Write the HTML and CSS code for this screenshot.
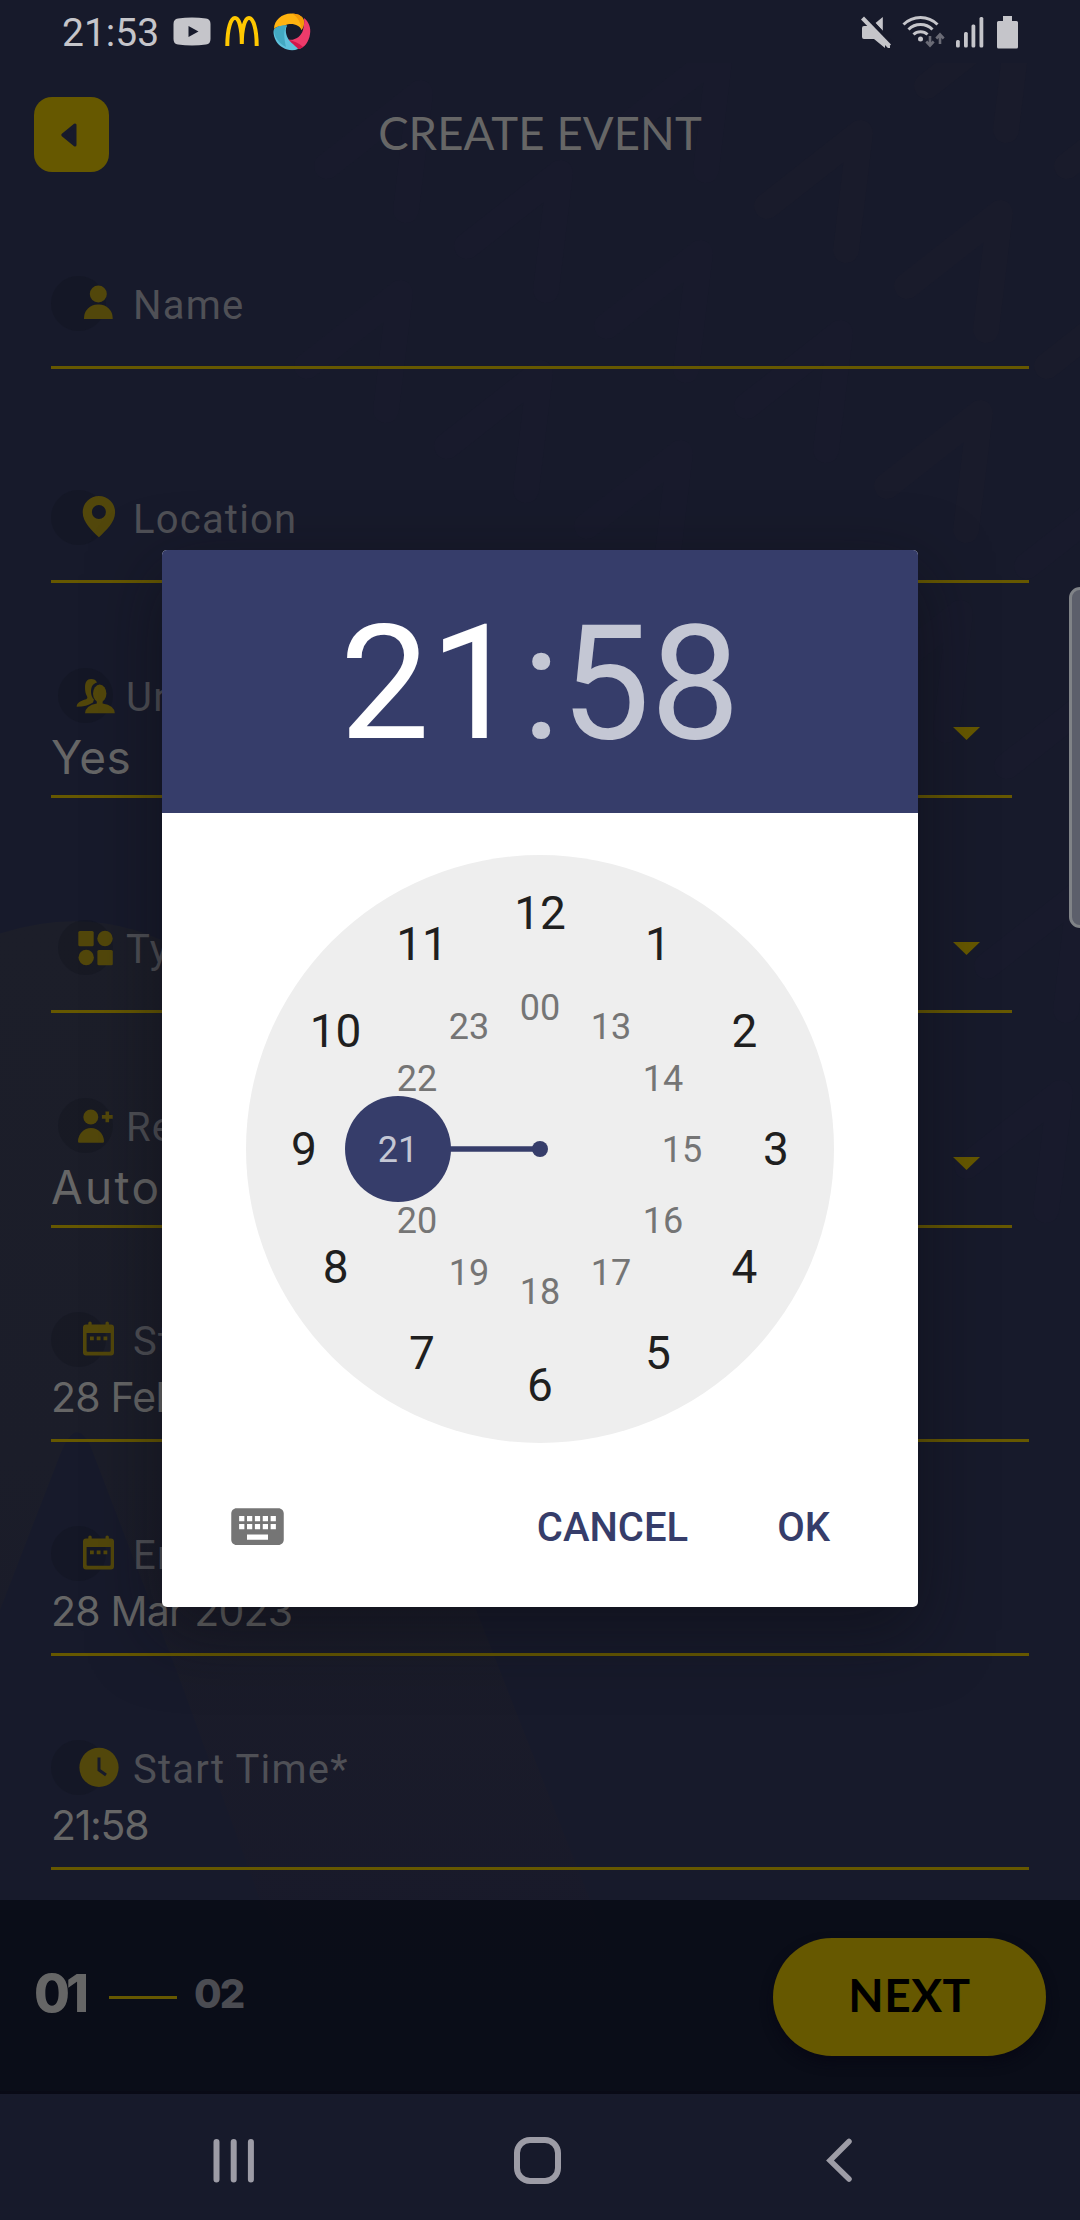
FILE: index.html
```html
<!DOCTYPE html>
<html lang="en">
<head>
<meta charset="utf-8">
<title>Create Event</title>
<link rel="stylesheet" href="styles.css">
</head>
<body>
<div class="screen">
  <svg class="backdrop" viewBox="0 0 1080 2220" aria-hidden="true">
    <defs>
      <path id="tick" d="M-93 73L0 0L-14 117" fill="none" stroke-width="26" stroke-linecap="round" stroke-linejoin="round"/>
      <linearGradient id="fade" x1="0" y1="0" x2="0" y2="1">
        <stop offset="0" stop-color="#1c1e29"/>
        <stop offset=".5" stop-color="#1b1d29"/>
        <stop offset="1" stop-color="#18192a"/>
      </linearGradient>
      <clipPath id="below-status"><rect y="63" width="1080" height="2030"/></clipPath>
    </defs>
    <g clip-path="url(#below-status)">
      <g stroke="#191b2b">
        <use href="#tick" x="860" y="133"/><use href="#tick" x="1000" y="213"/><use href="#tick" x="1020" y="13"/>
        <use href="#tick" x="1140" y="293"/><use href="#tick" x="1160" y="93"/><use href="#tick" x="980" y="413"/>
      </g>
      <g stroke="#181a2c">
        <use href="#tick" x="720" y="53"/><use href="#tick" x="700" y="253"/><use href="#tick" x="840" y="333"/>
        <use href="#tick" x="680" y="453"/><use href="#tick" x="560" y="173"/><use href="#tick" x="540" y="373"/>
        <use href="#tick" x="400" y="293"/><use href="#tick" x="420" y="93"/><use href="#tick" x="1120" y="493"/>
        <use href="#tick" x="960" y="613"/><use href="#tick" x="1100" y="693"/><use href="#tick" x="1080" y="893"/>
        <use href="#tick" x="1060" y="1093"/>
      </g>
      <path fill="url(#fade)" d="M-60 960Q75 885 190 955Q235 990 260 1060L590 1900L625 2000H310L260 1900L180 1680L90 1445Q75 1415 60 1455L0 1610L-60 1750Z"/>
    </g>
  </svg>

  <header class="status">
    <span class="status-time">21:53</span>
    <svg class="notif" width="38" height="38" viewBox="0 0 38 38"><path fill="#c5c5ca" d="M5 5.500Q19 3.500 33 5.500Q37.500 6 37.500 11V26Q37.500 31 33 31.500Q19 33.500 5 31.500Q.5 31 .5 26V11Q.5 6 5 5.500Z"/><path fill="#171a2b" d="M15.500 13v11l10-5.500z"/></svg>
    <svg class="notif notif-arches" width="34" height="38" viewBox="0 0 34 38"><path fill="none" stroke="#ffc800" stroke-width="4" d="M2.300 33C2.300 15 6 5 10 5S16.800 15 16.800 31C16.800 15 20 5 24 5S31.700 15 31.700 33"/></svg>
    <svg class="notif notif-swirl" width="38" height="38" viewBox="0 0 38 38">
      <path fill="#ffb310" d="M1 16C1 7 9 .5 18 .5C26 .5 31 4 31 9C31 12 30 15 28.500 17C27 12 18 9 12 12.500C7 13 3 13.500 1 16Z"/>
      <path fill="#f39a08" d="M19 .5C26 .5 31 4 31 9C31 12 30 15 28.500 17C28 10 25 4 19 .5Z"/>
      <path fill="#ee3b6b" d="M31 5C36 9 38 15 37 21C36 29 31 35 26 36C21 35 17 31 15.500 26.500C21 28 28 24 30 17C31 13 31.500 9 31 5Z"/>
      <path fill="#d3164a" d="M26 36C21 35 17 31 15.500 26.500C20 28 26 30 30 34Z"/>
      <path fill="#5fc2dd" d="M14 12.500C11 18 14 27 20 31C22 33 24 34.500 25 36C17 39.500 7 35 3 28C.5 23 0 19 1 16.500C4 13 9 12 14 12.500Z"/>
      <path fill="#43a9c2" d="M14 12.500C10 18 11 24 13 34C7 31 1 25 1 16.500C4 13 9 12 14 12.500Z"/>
    </svg>
    <svg class="system" width="160" height="36" viewBox="860 13 160 36">
      <g fill="#c5c5ca">
        <path d="M862 27q0-2 2-2h6l20 20v2h-2l-3-3v3l-11-9h-10q-2 0-2-2z"/>
        <path d="M875.500 22l7.300-6v14z"/>
        <path d="M864 15.500l27 28-3 3-27-28z"/>
        <circle cx="920.500" cy="38" r="2.500"/>
        <rect x="956" y="39" width="3.800" height="7.500" rx="1.500"/><rect x="964" y="31" width="3.800" height="15.500" rx="1.500"/><rect x="971.500" y="23.500" width="3.800" height="23" rx="1.500"/><rect x="979.500" y="16" width="3.800" height="30.500" rx="1.500"/>
        <path d="M1003 15h9v5h4.500q1.500 0 1.500 1.500v24.500q0 1.500-1.500 1.500h-18q-1.500 0-1.500-1.500v-24.500q0-1.500 1.500-1.500h4.500z"/>
      </g>
      <path d="M866 14l26 27" stroke="#171a2b" stroke-width="2.500"/>
      <g fill="none" stroke="#c5c5ca" stroke-width="3"><path d="M903.500 23.500a24 24 0 0 1 34 0M908.500 28.500a17 17 0 0 1 24 0M913.500 33.500a10 10 0 0 1 14 0"/></g>
      <g fill="none" stroke="#6a6b76" stroke-width="2.600"><path d="M930 35v10M926.300 40.500l3.700 4 3.700-4M940 43v-10M936.300 37.500l3.700-4 3.700 4"/></g>
    </svg>
  </header>

  <div class="titlebar">
    <button class="back" aria-label="Back"><svg width="18" height="26" viewBox="0 0 18 26"><path fill="#171a2b" stroke="#171a2b" stroke-width="3" stroke-linejoin="round" d="M15 3v20L2.800 13z"/></svg></button>
    <h1 class="title">CREATE EVENT</h1>
  </div>

  <main class="form">
    <div class="field field-first">
      <div class="label"><svg class="icon" viewBox="0 0 81 55"><circle class="blob" cx="27.500" cy="27.500" r="27.500"/><circle cx="47.300" cy="18" r="8.500"/><path d="M33 43v-1a13.500 13.500 0 0 1 13.500-13.500h1.700A13.500 13.500 0 0 1 61.700 42v1z"/></svg><span>Name</span></div>
    </div>
    <div class="field">
      <div class="label"><svg class="icon" viewBox="0 0 81 55"><circle class="blob" cx="27.500" cy="27.500" r="27.500"/><path fill-rule="evenodd" d="M47.900 6a16.200 16.200 0 0 1 16.200 16.200c0 10-9 18-16.200 25.100c-7-7-16.200-15-16.200-25.100A16.200 16.200 0 0 1 47.900 6zm0 9a7 7 0 1 0 0 14a7 7 0 1 0 0-14z"/></svg><span>Location</span></div>
    </div>
    <div class="field select tall">
      <div class="label"><svg class="icon" viewBox="0 0 67 55"><circle class="blob" cx="27.500" cy="27.500" r="27.500"/><path d="M27 19c0-5 2-8 6-8 3 0 5 1 6 3.500-4 1-6 4-6 9 0 3.500 1 6 3 8l-1 3q-6 4.200-16.300 4.200c0-4 4-6 9.500-7.500q2-1 .8-3c-1.500-2.500-2-5-2-9.200z"/><ellipse cx="41.700" cy="25.500" rx="6.700" ry="9"/><path d="M38.800 32h5.800v3.500q12 2 12.200 9.700H27q.5-7.700 11.800-9.700z"/></svg><span>Unlimited</span></div>
      <div class="value">Yes</div>
      <i class="caret"></i>
    </div>
    <div class="field select tall">
      <div class="label"><svg class="icon" viewBox="0 0 67 55"><circle class="blob" cx="27.500" cy="27.500" r="27.500"/><rect x="20.300" y="11" width="15.400" height="15.200" rx="1.500"/><circle cx="47" cy="18.500" r="7.700"/><circle cx="28.200" cy="37.500" r="7.700"/><rect x="39.400" y="30" width="15.400" height="15.200" rx="1.500"/></svg><span>Type</span></div>
      <i class="caret"></i>
    </div>
    <div class="field select tall">
      <div class="label"><svg class="icon" viewBox="0 0 67 55"><circle class="blob" cx="27.500" cy="27.500" r="27.500"/><circle cx="32.800" cy="19" r="7.500"/><path d="M20 43.500a13 13.500 0 0 1 26 0q0 1.300-1.300 1.300h-23.400q-1.300 0-1.300-1.300z"/><path d="M47.500 13.500h3.600v3.600h3.600v3.600h-3.600v3.600h-3.600v-3.600h-3.600v-3.600h3.600z"/></svg><span>Reserve</span></div>
      <div class="value wide">Auto</div>
      <i class="caret"></i>
    </div>
    <div class="field">
      <div class="label"><svg class="icon" viewBox="0 0 81 55"><circle class="blob" cx="27.500" cy="27.500" r="27.500"/><path fill-rule="evenodd" d="M37.300 12.500v-1.500q0-1.600 1.700-1.600t1.700 1.600v1.500h13.800v-1.500q0-1.600 1.700-1.600t1.700 1.600v1.500h2.100q3 0 3 3v25q0 3-3 3h-25q-3 0-3-3v-25q0-3 3-3zM35.600 21v17.500q0 1.300 1.300 1.300h21.500q1.300 0 1.300-1.300V21z"/><path d="M39 24.500h3.800v3.800H39zM45.700 24.500h3.800v3.800h-3.800zM52.500 24.500h3.800v3.800h-3.800z"/></svg><span>Start Date*</span></div>
      <div class="value date">28 Feb 2023</div>
    </div>
    <div class="field">
      <div class="label"><svg class="icon" viewBox="0 0 81 55"><circle class="blob" cx="27.500" cy="27.500" r="27.500"/><path fill-rule="evenodd" d="M37.300 12.500v-1.500q0-1.600 1.700-1.600t1.700 1.600v1.500h13.800v-1.500q0-1.600 1.700-1.600t1.700 1.600v1.500h2.100q3 0 3 3v25q0 3-3 3h-25q-3 0-3-3v-25q0-3 3-3zM35.600 21v17.500q0 1.300 1.300 1.300h21.500q1.300 0 1.300-1.300V21z"/><path d="M39 24.500h3.800v3.800H39zM45.700 24.500h3.800v3.800h-3.800zM52.500 24.500h3.800v3.800h-3.800z"/></svg><span>End Date*</span></div>
      <div class="value date">28 Mar 2023</div>
    </div>
    <div class="field">
      <div class="label"><svg class="icon" viewBox="0 0 81 55"><circle class="blob" cx="27.500" cy="27.500" r="27.500"/><circle cx="48" cy="27.400" r="19.600"/><path fill="none" stroke="#171a2b" stroke-width="3" d="M48 17.500v12.500l7 5"/></svg><span>Start Time*</span></div>
      <div class="value date time">21:58</div>
    </div>
  </main>

  <footer class="steps">
    <span class="step-now">01</span>
    <span class="step-line"></span>
    <span class="step-next">02</span>
    <button class="next">NEXT</button>
  </footer>

  <nav class="navbar">
    <svg width="42" height="46" viewBox="0 0 42 46"><path stroke="#9d9ca6" stroke-width="6" stroke-linecap="round" d="M3.500 5v37.500M20.700 5v37.500M37.900 5v37.500"/></svg>
    <svg class="home" width="48" height="48" viewBox="0 0 48 48"><rect x="4" y="4" width="41" height="41" rx="13" fill="none" stroke="#9d9ca6" stroke-width="6"/></svg>
    <svg width="28" height="46" viewBox="0 0 28 46"><path fill="none" stroke="#9d9ca6" stroke-width="5.500" stroke-linecap="round" d="M24 4.500L5 23.500L24 42"/></svg>
  </nav>

  <div class="edge-handle"></div>

  <section class="dialog">
    <div class="clock-head"><span class="hh">21</span><span class="colon">:</span><span class="mm">58</span></div>
    <svg class="dial" viewBox="-294 -294 588 588">
      <circle r="294" fill="#eee"/>
      <path d="M-142 0H0" stroke="#363d6a" stroke-width="5.300"/>
      <circle r="8" fill="#363d6a"/>
      <circle cx="-142" r="53" fill="#363d6a"/>
      <g class="outer">
        <text x="0" y="-220">12</text><text x="118" y="-189">1</text><text x="204.400" y="-102">2</text><text x="236" y="16">3</text><text x="204.400" y="134">4</text><text x="118" y="220">5</text><text x="0" y="252">6</text><text x="-118" y="220">7</text><text x="-204.400" y="134">8</text><text x="-236" y="16">9</text><text x="-204.400" y="-102">10</text><text x="-118" y="-189">11</text>
      </g>
      <g class="inner">
        <text x="0" y="-129">00</text><text x="71" y="-110">13</text><text x="123" y="-58">14</text><text x="142" y="13">15</text><text x="123" y="84">16</text><text x="71" y="136">17</text><text x="0" y="155">18</text><text x="-71" y="136">19</text><text x="-123" y="84">20</text><text class="picked" x="-142" y="13">21</text><text x="-123" y="-58">22</text><text x="-71" y="-110">23</text>
      </g>
    </svg>
    <div class="actions">
      <svg class="keyboard" width="63" height="63" viewBox="0 0 24 24"><path fill="#757575" d="M20 5H4c-1.100 0-1.990.9-1.990 2L2 17c0 1.100.9 2 2 2h16c1.100 0 2-.9 2-2V7c0-1.100-.9-2-2-2zm-9 3h2v2h-2V8zm0 3h2v2h-2v-2zM8 8h2v2H8V8zm0 3h2v2H8v-2zm-1 2H5v-2h2v2zm0-3H5V8h2v2zm9 7H8v-2h8v2zm0-4h-2v-2h2v2zm0-3h-2V8h2v2zm3 3h-2v-2h2v2zm0-3h-2V8h2v2z"/></svg>
      <button class="cancel">CANCEL</button>
      <button class="ok">OK</button>
    </div>
  </section>
</div>
</body>
</html>
```
FILE: styles.css
```css
* { box-sizing: border-box; }
body { margin: 0; background: #171a2b; }
button { border: 0; padding: 0; background: none; }
svg { display: block; flex: none; }

.screen {
  position: relative;
  width: 1080px;
  height: 2220px;
  overflow: hidden;
  display: flex;
  flex-direction: column;
  background: #171a2b;
  font-family: Inter, "Liberation Sans", sans-serif;
  color: #666;
}
.backdrop { position: absolute; inset: 0; width: 1080px; height: 2220px; }
.status, .titlebar, .form, .steps, .navbar { position: relative; flex: none; }

.status { height: 63px; display: flex; align-items: center; padding: 0 60px 0 62px; }
.status-time { width: 111px; font: 39px/63px Roboto, sans-serif; color: #c5c5ca; padding-top: 4px; }
.notif-arches { margin-left: 14px; }
.notif-swirl { margin-left: 14px; }
.system { margin-left: auto; }

.titlebar { height: 127px; padding: 16px 34px 0; display: grid; grid-template-columns: 75px 1fr 75px; align-items: center; }
.back { width: 75px; height: 75px; border-radius: 18px; background: #665800; display: flex; align-items: center; justify-content: center; padding-right: 6px; }
.title { margin: 0; padding-bottom: 4px; text-align: center; font: 400 45.500px/60px Lato, sans-serif; letter-spacing: .1px; white-space: nowrap; }

.form { height: 1710px; padding: 0 51px; display: flex; flex-direction: column; }
.field { position: relative; height: 214px; border-bottom: 3px solid #665800; display: flex; flex-direction: column; justify-content: flex-end; flex: none; }
.field.tall { height: 215px; }
.field-first { height: 179px; }
.select { margin-right: 17px; }
.label { display: flex; height: 55px; font: 40px/55px Roboto, sans-serif; letter-spacing: 1.200px; color: #4f5056; white-space: nowrap; }
.label span { padding-top: 2px; padding-left: 1px; }
.label:last-child, .label:nth-last-child(2):has(+ .caret) { margin-bottom: 35px; }
.icon { width: 81px; height: 55px; fill: #52470b; }
.select .label { margin-left: 7px; }
.select .icon { width: 67px; }
.blob { fill: #10141c; fill-opacity: .32; }
.value { height: 72px; display: flex; align-items: flex-end; padding-bottom: 15px; font-size: 46px; line-height: 46px; letter-spacing: .5px; white-space: nowrap; }
.value.wide { letter-spacing: 2.300px; }
.value.date { font-size: 41px; line-height: 41px; letter-spacing: -.8px; padding-bottom: 21px; }
.value.time { letter-spacing: -1.300px; }
.caret { position: absolute; right: 32px; bottom: 55px; width: 27px; height: 13px; background: #665800; clip-path: polygon(0 0, 100% 0, 50% 100%); }

.steps { height: 194px; padding: 2px 34px 0 34px; display: flex; align-items: center; background: rgba(0, 3, 10, .56); border-bottom: 3px solid #090a16; }
.step-now { width: 75px; font-size: 52px; font-weight: 800; letter-spacing: -4px; padding-bottom: 6px; }
.step-line { width: 68px; height: 3px; margin-top: 2px; background: #665800; }
.step-next { margin-left: 17px; font-size: 40px; font-weight: 800; color: #4b4c52; letter-spacing: -2px; padding-bottom: 7px; }
.next { margin-left: auto; width: 273px; height: 118px; border-radius: 59px; background: #665800; color: #000; font: 700 46px/114px Lato, sans-serif; letter-spacing: .5px; padding-bottom: 4px; box-shadow: 0 7px 12px rgba(8, 7, 20, .8); }

.navbar { height: 126px; display: flex; align-items: center; padding: 6px 227px 0 213px; justify-content: space-between; }
.home { margin-right: 7px; }

.edge-handle { position: absolute; left: 1069px; top: 587px; width: 22px; height: 341px; border: 3px solid #808387; border-radius: 11px; background: #5c5f6b; }

.dialog { position: absolute; left: 162px; top: 550px; width: 756px; height: 1057px; border-radius: 5px; overflow: hidden; background: #fff; display: flex; flex-direction: column; align-items: center; box-shadow: 0 24px 70px rgba(12, 12, 18, .5); font-family: Roboto, sans-serif; }
.clock-head { width: 100%; height: 263px; padding-top: 2px; background: #363d6a; color: #c4c7d4; display: flex; justify-content: center; font-size: 160px; line-height: 263px; }
.hh { color: #fff; margin-right: 2px; }
.dial { width: 588px; height: 588px; margin-top: 42px; }
.dial text { text-anchor: middle; }
.outer { font-size: 46px; fill: #1f1f1f; }
.inner { font-size: 36px; fill: #757575; }
.inner .picked { fill: #c4c7d4; }
.actions { width: 100%; display: flex; align-items: center; padding: 50px 88px 0 64px; }
.actions button { font: 500 40px/63px Roboto, sans-serif; color: #363d6a; padding-top: 3px; }
.cancel { margin-left: auto; margin-right: 89px; }
```
